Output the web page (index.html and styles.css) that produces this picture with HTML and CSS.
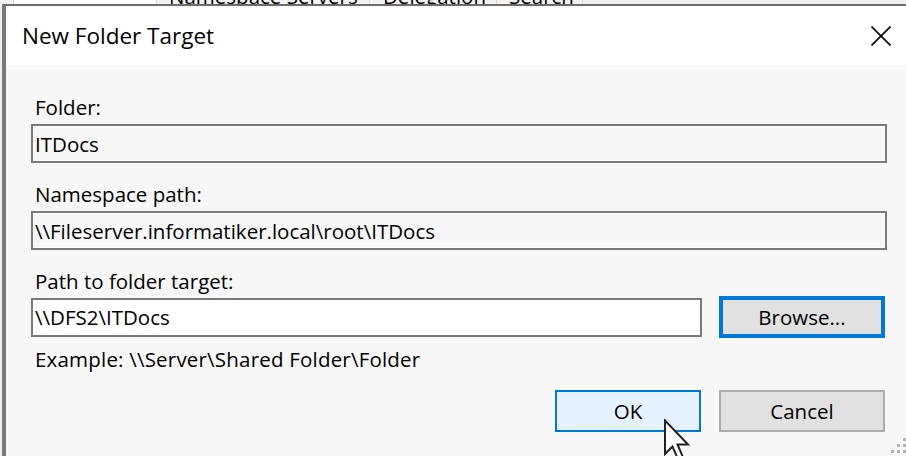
FILE: index.html
```html
<!DOCTYPE html>
<html>
<head>
<meta charset="utf-8">
<title>New Folder Target</title>
<link rel="stylesheet" href="styles.css">
</head>
<body>
<div class="screen">
  <div class="backwin">
    <span class="cell cell-a"></span>
    <span class="cell cell-b"></span>
    <span class="cell cell-ns"><span class="tabtext">Namespace Servers</span></span>
    <span class="cell cell-del"><span class="tabtext">Delegation</span></span>
    <span class="cell cell-search"><span class="tabtext">Search</span></span>
    <span class="cell cell-rest"></span>
  </div>
  <div class="dialog">
    <div class="titlebar">
      <span class="title">New Folder Target</span>
      <svg class="close" width="20" height="20" viewBox="0 0 20 20">
        <path d="M0.5 0.5 L19.5 19.5 M19.5 0.5 L0.5 19.5" stroke="#000" stroke-width="1.6" fill="none"/>
      </svg>
    </div>
    <div class="content">
      <div class="label">Folder:</div>
      <div class="field readonly">ITDocs</div>
      <div class="label">Namespace path:</div>
      <div class="field readonly">\\Fileserver.informatiker.local\root\ITDocs</div>
      <div class="label label-tight">Path to folder target:</div>
      <div class="row">
        <div class="field editable">\\DFS2\ITDocs</div>
        <button class="btn btn-browse">Browse...</button>
      </div>
      <div class="hint">Example: \\Server\Shared Folder\Folder</div>
      <div class="actions">
        <button class="btn btn-ok">OK</button>
        <button class="btn btn-cancel">Cancel</button>
      </div>
    </div>
  </div>
  <svg class="grip" width="15" height="15" viewBox="0 0 15 15">
    <rect x="12" y="0" width="3" height="3" fill="#b4b4b4"/>
    <rect x="6" y="6" width="3" height="3" fill="#b4b4b4"/>
    <rect x="12" y="6" width="3" height="3" fill="#b4b4b4"/>
    <rect x="0" y="12" width="3" height="3" fill="#b4b4b4"/>
    <rect x="6" y="12" width="3" height="3" fill="#b4b4b4"/>
    <rect x="12" y="12" width="3" height="3" fill="#b4b4b4"/>
  </svg>
  <svg class="cursor" width="30" height="44" viewBox="0 0 30 44">
    <path d="M2 1.5 L2 35 L9.5 27.5 L15.5 41.5 L20.5 39.5 L14.5 25.5 L25 25.5 Z" fill="#fff" stroke="#222" stroke-width="2" stroke-linejoin="miter"/>
  </svg>
</div>
</body>
</html>
```
FILE: styles.css
```css
html, body {
  margin: 0;
  padding: 0;
}

body {
  width: 906px;
  height: 456px;
  overflow: hidden;
  background: #f0f0f0;
  font-family: "Open Sans", "Noto Sans", sans-serif;
  color: #000;
}

.screen {
  position: relative;
  width: 906px;
  height: 456px;
  display: flex;
  flex-direction: column;
}

/* window behind the dialog */
.backwin {
  height: 4px;
  flex: 0 0 4px;
  overflow: hidden;
  display: flex;
  background: #fff;
  font-size: 20.5px;
}

.cell {
  display: block;
  height: 4px;
  overflow: hidden;
  border-right: 1px solid #d6d6d6;
  box-sizing: border-box;
}

.cell-a { width: 14px; background: #f0f0f0; }
.cell-b { width: 143px; background: #fff; }
.cell-ns { width: 213px; padding-left: 12px; background: #f3f3f3; }
.cell-del { width: 127px; padding-left: 13px; background: #f3f3f3; }
.cell-search { width: 86px; padding-left: 12px; background: #f3f3f3; }
.cell-rest { flex: 1; border-right: none; background: #f0f0f0; }

.tabtext {
  display: block;
  line-height: 28px;
  margin-top: -18px;
  white-space: nowrap;
}

/* dialog */
.dialog {
  flex: 1;
  display: flex;
  flex-direction: column;
  margin-left: 2px;
  border-top: 2px solid #6d6d6d;
  border-left: 4px solid #7a7a7a;
  background: #f7f7f7;
}

.titlebar {
  height: 59px;
  flex: 0 0 59px;
  background: #fff;
  display: flex;
  align-items: center;
  justify-content: space-between;
  padding: 0 15px 0 16px;
}

.title {
  font-size: 22.5px;
  line-height: 30px;
}

.close {
  display: block;
}

.content {
  display: flex;
  flex-direction: column;
  padding: 28px 19px 0 25px;
  font-size: 20.5px;
}

.label {
  line-height: 28px;
  padding-left: 4px;
  margin-bottom: 3px;
  white-space: nowrap;
}

.label-tight {
  margin-bottom: 1px;
}

.field {
  box-sizing: border-box;
  height: 39px;
  border: 2px solid #7a7a7a;
  display: flex;
  align-items: center;
  padding-left: 2px;
  line-height: 28px;
  margin-bottom: 17px;
  white-space: nowrap;
}

.readonly {
  background: #f7f7f7;
  box-shadow: inset 0 0 0 1px #fff;
}

.editable {
  background: #fff;
}

.row {
  display: flex;
  align-items: center;
  gap: 17px;
  padding-right: 2px;
}

.row .field {
  flex: 1;
  margin-bottom: 0;
}

.btn {
  box-sizing: border-box;
  height: 42px;
  padding: 0;
  margin: 0;
  font-family: inherit;
  font-size: 20.5px;
  color: #000;
  line-height: 28px;
  background: #e1e1e1;
  border: 2px solid #adadad;
}

.btn-browse {
  width: 166px;
  border: 4px solid #0078d7;
}

.hint {
  line-height: 28px;
  padding-left: 4px;
  margin-top: 7px;
  white-space: nowrap;
  letter-spacing: 0.2px;
}

.actions {
  display: flex;
  justify-content: flex-end;
  gap: 18px;
  margin-top: 17px;
  padding-right: 2px;
}

.btn-ok {
  width: 146px;
  background: #e5f1fb;
  border: 2px solid #0078d7;
}

.btn-cancel {
  width: 166px;
}

/* overlays */
.grip {
  position: absolute;
  right: 0;
  bottom: 3px;
}

.cursor {
  position: absolute;
  left: 663px;
  top: 419px;
}
```
